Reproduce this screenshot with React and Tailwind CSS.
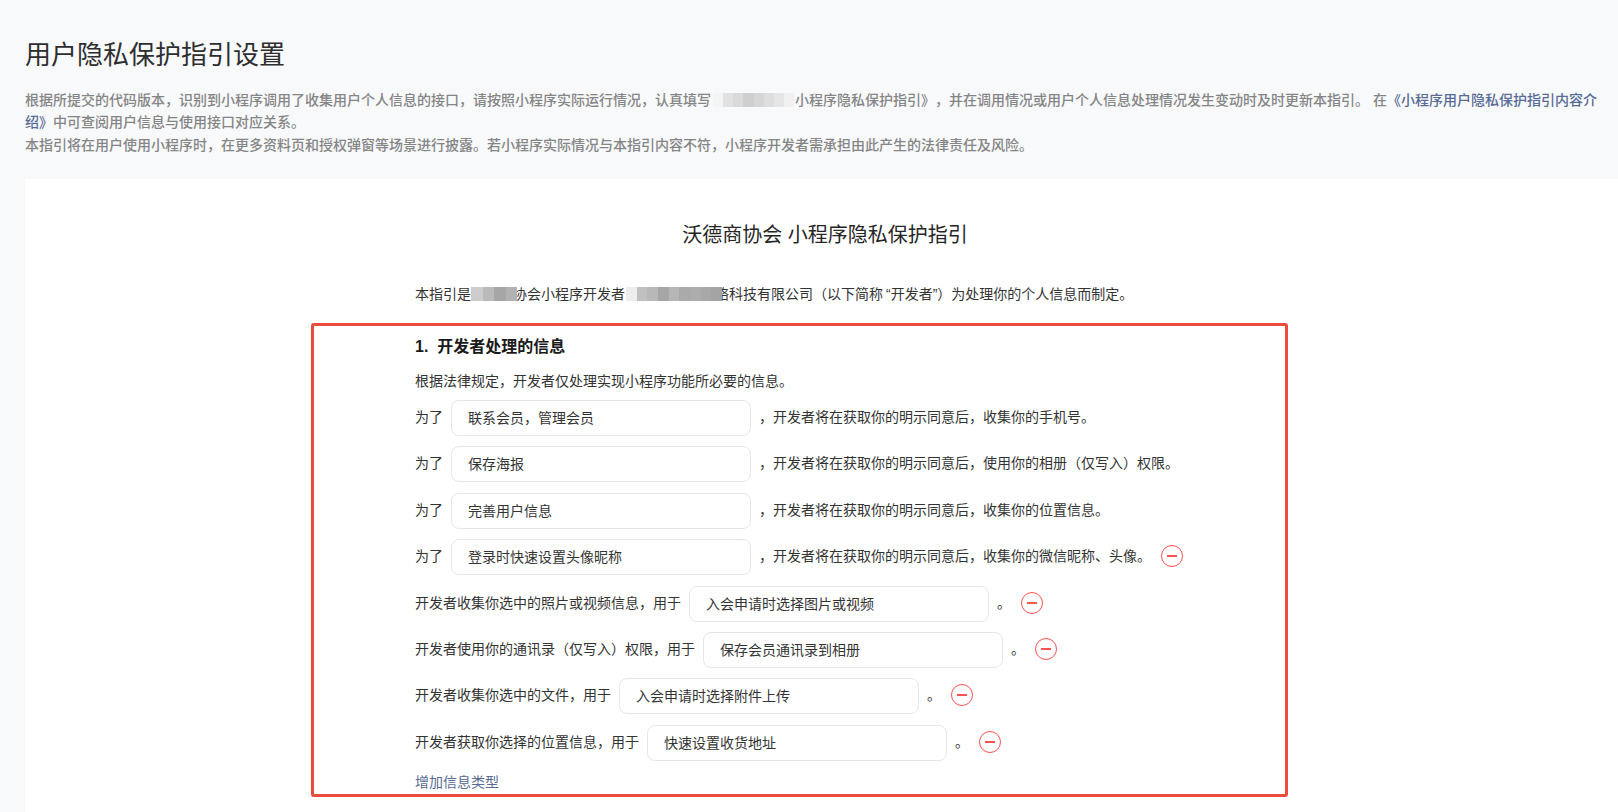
import React from 'react';

const purposeRows = [
  { purpose: '联系会员，管理会员', tail: '，开发者将在获取你的明示同意后，收集你的手机号。' },
  { purpose: '保存海报', tail: '，开发者将在获取你的明示同意后，使用你的相册（仅写入）权限。' },
  { purpose: '完善用户信息', tail: '，开发者将在获取你的明示同意后，收集你的位置信息。' },
  { purpose: '登录时快速设置头像昵称', tail: '，开发者将在获取你的明示同意后，收集你的微信昵称、头像。', removable: true },
];

const usageRows = [
  { lead: '开发者收集你选中的照片或视频信息，用于', purpose: '入会申请时选择图片或视频' },
  { lead: '开发者使用你的通讯录（仅写入）权限，用于', purpose: '保存会员通讯录到相册' },
  { lead: '开发者收集你选中的文件，用于', purpose: '入会申请时选择附件上传' },
  { lead: '开发者获取你选择的位置信息，用于', purpose: '快速设置收货地址' },
];

function RemoveIcon() {
  return (
    <svg width="22" height="22" viewBox="0 0 22 22" fill="none" className="ml-2.5 mb-0.5 shrink-0">
      <circle cx="11" cy="11" r="10.5" stroke="#fa5151" />
      <rect x="6" y="10" width="10" height="2" fill="#fa5151" />
    </svg>
  );
}

function PurposeBox({ text }) {
  return (
    <div className="w-[300px] h-9 mx-2 px-4 flex items-center shrink-0 bg-white border border-[#e7e7e7] rounded-lg text-[#333333]">
      {text}
    </div>
  );
}

// the redacted parts of the screenshot
function Mosaic({ cells, className }) {
  return (
    <span className={`relative inline-flex align-[-2px] ${className}`}>
      {cells.map((c, i) => (
        <span key={i} className={`block h-full flex-1 ${c}`}></span>
      ))}
    </span>
  );
}

export default function App() {
  return (
    <div className="h-[812px] overflow-hidden bg-[#f8f9fb] pl-[25px] pt-[39px] [text-spacing-trim:space-all] font-['Liberation_Sans','Noto_Sans_CJK_SC',sans-serif]">
      <h1 className="text-[26px] leading-8 font-normal text-[#2e2e2e]">用户隐私保护指引设置</h1>

      <p className="mt-[18px] w-[1575px] h-[67px] text-sm leading-[22.3px] font-medium text-[#858585]">
        根据所提交的代码版本，识别到小程序调用了收集用户个人信息的接口，请按照小程序实际运行情况，认真填写
        <Mosaic
          className="w-[81px] h-[14px] ml-0.5 mr-px"
          cells={['bg-[#f4f4f4]', 'bg-[#e2e2e2]', 'bg-[#dadada]', 'bg-[#cfcfcf]', 'bg-[#d6d6d6]', 'bg-[#dedede]', 'bg-[#e6e6e6]', 'bg-[#f0f0f0]']}
        />
        小程序隐私保护指引》，并在调用情况或用户个人信息处理情况发生变动时及时更新本指引。 在
        <span className="text-[#576b95]">《小程序用户隐私保护指引内容介绍》</span>
        中可查阅用户信息与使用接口对应关系。
        <br />
        本指引将在用户使用小程序时，在更多资料页和授权弹窗等场景进行披露。若小程序实际情况与本指引内容不符，小程序开发者需承担由此产生的法律责任及风险。
      </p>

      <div className="mt-[23px] bg-white h-[700px] pt-[42px]">
        <div className="ml-[390px] w-[820px]">
          <h2 className="text-xl leading-7 font-normal text-center text-[#262626]">沃德商协会 小程序隐私保护指引</h2>
          <p className="mt-[33px] text-sm leading-6 whitespace-nowrap text-[#333333]">
            本指引是
            <Mosaic
              className="w-[46px] h-[14px] -mr-1 z-10"
              cells={['bg-[#cccccc]', 'bg-[#bababa]', 'bg-[#a6a6a6]', 'bg-[#b2b2b2]']}
            />
            协会小程序开发者
            <Mosaic
              className="w-[96px] h-[14px] ml-px -mr-[7px] z-10"
              cells={['bg-[#ededed]', 'bg-[#c0c0c0]', 'bg-[#b8b8b8]', 'bg-[#a6a6a6]', 'bg-[#b6b6b6]', 'bg-[#aaaaaa]', 'bg-[#adadad]', 'bg-[#a8a8a8]', 'bg-[#a4a4a4]']}
            />
            络科技有限公司（以下简称
            <span className="pl-[3px]">“</span>开发者”）为处理你的个人信息而制定。
          </p>
        </div>

        {/* red annotation frame around section 1 */}
        <section className="ml-[286px] mt-[17px] w-[977px] h-[474px] border-[3px] border-[#ef4a3e] rounded-[3px] pl-[101px] pt-[9px] text-sm text-[#333333]">
          <h3 className="text-base leading-6 font-semibold text-[#1a1a1a]">1.&nbsp;&nbsp;开发者处理的信息</h3>
          <p className="mt-[10px] leading-6">根据法律规定，开发者仅处理实现小程序功能所必要的信息。</p>

          <div className="mt-[7px] flex flex-col gap-[10.4px]">
            {purposeRows.map((row) => (
              <div key={row.purpose} className="flex items-center h-9">
                <span className="pb-0.5">为了</span>
                <PurposeBox text={row.purpose} />
                <span className="pb-0.5">{row.tail}</span>
                {row.removable && <RemoveIcon />}
              </div>
            ))}
            {usageRows.map((row) => (
              <div key={row.purpose} className="flex items-center h-9">
                <span className="pb-0.5">{row.lead}</span>
                <PurposeBox text={row.purpose} />
                <span className="pb-0.5">。</span>
                <RemoveIcon />
              </div>
            ))}
          </div>

          <a className="block mt-[11px] leading-5 text-[#576b95]">增加信息类型</a>
        </section>
      </div>
    </div>
  );
}
